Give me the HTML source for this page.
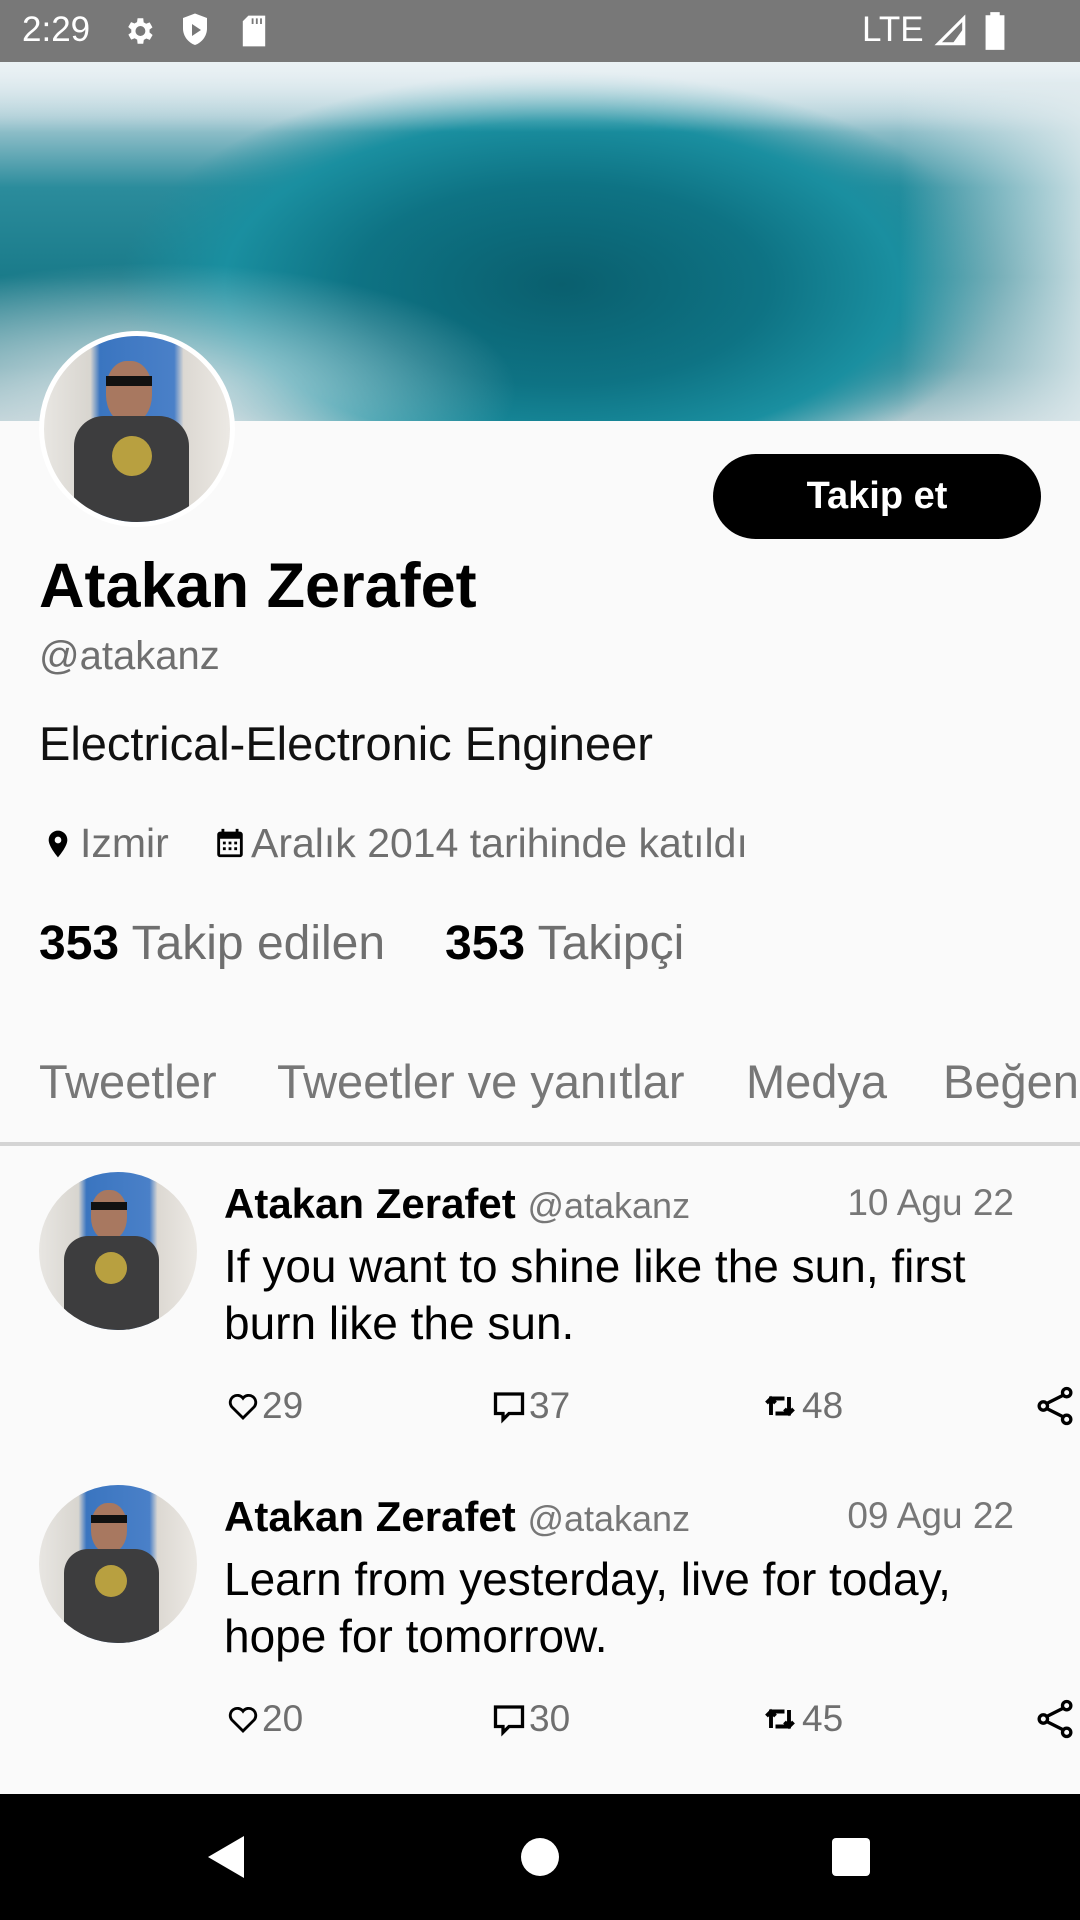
<!DOCTYPE html>
<html><head><meta charset="utf-8"><style>
*{margin:0;padding:0;box-sizing:border-box}
body{width:1080px;height:1920px;background:#fafafa;font-family:"Liberation Sans",Roboto,sans-serif;position:relative;overflow:hidden;color:#000}
.a{position:absolute;white-space:nowrap}
.sb{left:0;top:0;width:1080px;height:62px;background:#787878;color:#fff}
.banner{left:0;top:62px;width:1080px;height:359px;overflow:hidden;
background:radial-gradient(ellipse 48% 70% at 52% 62%,#0a5f6e 0%,#0e7384 40%,#1a8fa0 65%,rgba(40,140,160,0) 85%),
linear-gradient(180deg,#dfe9ee 0%,#a8cbd4 15%,#2b8c9c 35%,#1a7b8a 60%,#5a9aa5 85%,#b0c9cf 100%)}
.av{border-radius:50%;overflow:hidden;background:linear-gradient(90deg,#e8e6e2 0%,#d8d5cf 25%,#3a75c0 30%,#4a80c8 70%,#dcd8d2 75%,#ece9e4 100%)}
.gray{color:#6f6f6f}
.act{font-size:37px;color:#6f6f6f;display:flex;align-items:center;gap:2px}
</style></head><body>
<div class="a sb">
 <div class="a" style="left:22px;top:10px;font-size:35px">2:29</div>
 <svg class="a" style="left:122px;top:14px" width="34" height="34" viewBox="0 0 24 24"><path fill="#fff" d="M19.4 13a7.5 7.5 0 0 0 0-2l2.1-1.6-2-3.5-2.5 1a7 7 0 0 0-1.7-1L15 3h-4l-.4 2.7a7 7 0 0 0-1.7 1l-2.5-1-2 3.5L6.6 11a7.5 7.5 0 0 0 0 2l-2.1 1.6 2 3.5 2.5-1a7 7 0 0 0 1.7 1L11 21h4l.4-2.7a7 7 0 0 0 1.7-1l2.5 1 2-3.5zM13 15.5a3.5 3.5 0 1 1 0-7 3.5 3.5 0 0 1 0 7z"/></svg>
 <svg class="a" style="left:180px;top:12px" width="30" height="36" viewBox="0 0 20 24"><path fill="#fff" d="M10 1 2 4v7c0 5 3.5 9.5 8 11 4.5-1.5 8-6 8-11V4z"/><path fill="#787878" d="M8 8v8l6-4z"/></svg>
 <svg class="a" style="left:240px;top:14px" width="28" height="34" viewBox="0 0 20 24"><path fill="#fff" d="M6 1h12v22H2V5z"/><path stroke="#787878" stroke-width="1.3" d="M9 3v4M12 3v4M15 3v4"/></svg>
 <div class="a" style="left:862px;top:10px;font-size:35px">LTE</div>
 <svg class="a" style="left:934px;top:14px" width="34" height="34" viewBox="0 0 24 24"><path fill="none" stroke="#fff" stroke-width="2.2" d="M21 3v18H3z"/><path fill="#fff" d="M21 10v11h-8z"/></svg>
 <svg class="a" style="left:984px;top:12px" width="22" height="38" viewBox="0 0 14 24"><path fill="#fff" d="M4 0h6v2h3v22H1V2h3z"/></svg>
</div>
<div class="a banner">
 <div class="a" style="left:0;top:0;width:1080px;height:70px;background:linear-gradient(180deg,rgba(235,242,245,.95),rgba(235,242,245,0))"></div>
 <div class="a" style="left:0;top:200px;width:520px;height:160px;background:radial-gradient(ellipse at 30% 80%,rgba(225,232,235,.85),rgba(200,215,220,0) 70%)"></div>
 <div class="a" style="left:900px;top:20px;width:180px;height:340px;background:linear-gradient(90deg,rgba(220,232,236,0),rgba(225,235,238,.85))"></div>
</div>
<div class="a av" style="left:39px;top:331px;width:196px;height:196px;border:5px solid #fff">
 <div class="a" style="left:62px;top:25px;width:46px;height:62px;border-radius:45%;background:#a87860"></div>
 <div class="a" style="left:62px;top:40px;width:46px;height:10px;background:#111"></div>
 <div class="a" style="left:30px;top:80px;width:115px;height:120px;border-radius:30px 30px 0 0;background:#3d3d3e"></div>
 <div class="a" style="left:68px;top:100px;width:40px;height:40px;border-radius:50%;background:#b8a040"></div>
</div>
<div class="a" style="left:713px;top:454px;width:328px;height:85px;border-radius:43px;background:#000;color:#fff;font-weight:bold;font-size:38px;text-align:center;line-height:85px">Takip et</div>
<div class="a" style="left:39px;top:550px;font-size:63px;font-weight:bold">Atakan Zerafet</div>
<div class="a gray" style="left:39px;top:634px;font-size:40px">@atakanz</div>
<div class="a" style="left:39px;top:716px;font-size:47px;color:#111">Electrical-Electronic Engineer</div>
<svg class="a" style="left:42px;top:826px" width="32" height="36" viewBox="0 0 24 24"><path fill="#000" d="M12 2a7 7 0 0 0-7 7c0 5 7 13 7 13s7-8 7-13a7 7 0 0 0-7-7zm0 9.5a2.5 2.5 0 1 1 0-5 2.5 2.5 0 0 1 0 5z"/></svg>
<div class="a gray" style="left:80px;top:820px;font-size:41px">Izmir</div>
<svg class="a" style="left:213px;top:826px" width="34" height="34" viewBox="0 0 24 24"><path fill="#000" d="M19 4h-1V2h-2v2H8V2H6v2H5a2 2 0 0 0-2 2v14a2 2 0 0 0 2 2h14a2 2 0 0 0 2-2V6a2 2 0 0 0-2-2zm0 16H5V9h14zM7 11h2v2H7zm4 0h2v2h-2zm4 0h2v2h-2zm-8 4h2v2H7zm4 0h2v2h-2zm4 0h2v2h-2z"/></svg>
<div class="a gray" style="left:251px;top:820px;font-size:41px">Aralık 2014 tarihinde katıldı</div>
<div class="a" style="left:39px;top:916px;font-size:48px"><b>353</b> <span class="gray">Takip edilen</span></div>
<div class="a" style="left:445px;top:916px;font-size:48px"><b>353</b> <span class="gray">Takipçi</span></div>
<div class="a gray" style="left:39px;top:1054px;font-size:47px;color:#777">Tweetler</div>
<div class="a gray" style="left:277px;top:1054px;font-size:47px;color:#777">Tweetler ve yanıtlar</div>
<div class="a gray" style="left:746px;top:1054px;font-size:47px;color:#777">Medya</div>
<div class="a gray" style="left:943px;top:1054px;font-size:47px;color:#777">Beğeni</div>
<div class="a" style="left:0;top:1142px;width:1080px;height:4px;background:#d4d4d4"></div>

<div class="a" style="left:0;top:1170px;width:1080px;height:300px">
 <div class="a av" style="left:39px;top:2px;width:158px;height:158px">
  <div class="a" style="left:52px;top:18px;width:36px;height:50px;border-radius:45%;background:#a87860"></div>
  <div class="a" style="left:52px;top:30px;width:36px;height:8px;background:#111"></div>
  <div class="a" style="left:25px;top:64px;width:95px;height:100px;border-radius:24px 24px 0 0;background:#3d3d3e"></div>
  <div class="a" style="left:56px;top:80px;width:32px;height:32px;border-radius:50%;background:#b8a040"></div>
 </div>
 <div class="a" style="left:224px;top:10px;font-size:42px;font-weight:bold">Atakan Zerafet <span style="font-weight:normal;font-size:36px;color:#777">@atakanz</span></div>
 <div class="a" style="right:66px;top:12px;font-size:37px;color:#777">10 Agu 22</div>
 <div class="a" style="left:224px;top:68px;font-size:46px;line-height:57px">If you want to shine like the sun, first<br>burn like the sun.</div>
</div>
<div class="a" style="left:0;top:1483px;width:1080px;height:300px">
 <div class="a av" style="left:39px;top:2px;width:158px;height:158px">
  <div class="a" style="left:52px;top:18px;width:36px;height:50px;border-radius:45%;background:#a87860"></div>
  <div class="a" style="left:52px;top:30px;width:36px;height:8px;background:#111"></div>
  <div class="a" style="left:25px;top:64px;width:95px;height:100px;border-radius:24px 24px 0 0;background:#3d3d3e"></div>
  <div class="a" style="left:56px;top:80px;width:32px;height:32px;border-radius:50%;background:#b8a040"></div>
 </div>
 <div class="a" style="left:224px;top:10px;font-size:42px;font-weight:bold">Atakan Zerafet <span style="font-weight:normal;font-size:36px;color:#777">@atakanz</span></div>
 <div class="a" style="right:66px;top:12px;font-size:37px;color:#777">09 Agu 22</div>
 <div class="a" style="left:224px;top:68px;font-size:46px;line-height:57px">Learn from yesterday, live for today,<br>hope for tomorrow.</div>
</div>

<div class="a" style="left:0;top:1385px;width:1080px;height:50px">
 <div class="a act" style="left:226px;top:0"><svg width="34" height="34" viewBox="0 0 24 24"><path fill="none" stroke="#000" stroke-width="2" d="M12 20.5 4 12.5a5 5 0 0 1 8-6 5 5 0 0 1 8 6z"/></svg>29</div>
 <div class="a act" style="left:491px;top:0"><svg width="36" height="36" viewBox="0 0 24 24"><path fill="none" stroke="#000" stroke-width="2.2" d="M3 4h18v13H12l-4 4v-4H3z"/></svg>37</div>
 <div class="a act" style="left:760px;top:0"><svg width="40" height="36" viewBox="0 0 24 24"><path fill="none" stroke="#000" stroke-width="2.6" d="M6 18V7h9M3 10l3-3 3 3M18 6v11H9M15 14l3 3 3-3"/></svg>48</div>
 <svg class="a" style="left:1035px;top:0" width="40" height="42" viewBox="0 0 24 24"><g fill="none" stroke="#000" stroke-width="2"><circle cx="19" cy="4" r="2.5"/><circle cx="5" cy="12" r="2.5"/><circle cx="19" cy="20" r="2.5"/><path d="M17 5.5 7 10.5M7 13.5l10 5"/></g></svg>
</div>
<div class="a" style="left:0;top:1698px;width:1080px;height:50px">
 <div class="a act" style="left:226px;top:0"><svg width="34" height="34" viewBox="0 0 24 24"><path fill="none" stroke="#000" stroke-width="2" d="M12 20.5 4 12.5a5 5 0 0 1 8-6 5 5 0 0 1 8 6z"/></svg>20</div>
 <div class="a act" style="left:491px;top:0"><svg width="36" height="36" viewBox="0 0 24 24"><path fill="none" stroke="#000" stroke-width="2.2" d="M3 4h18v13H12l-4 4v-4H3z"/></svg>30</div>
 <div class="a act" style="left:760px;top:0"><svg width="40" height="36" viewBox="0 0 24 24"><path fill="none" stroke="#000" stroke-width="2.6" d="M6 18V7h9M3 10l3-3 3 3M18 6v11H9M15 14l3 3 3-3"/></svg>45</div>
 <svg class="a" style="left:1035px;top:0" width="40" height="42" viewBox="0 0 24 24"><g fill="none" stroke="#000" stroke-width="2"><circle cx="19" cy="4" r="2.5"/><circle cx="5" cy="12" r="2.5"/><circle cx="19" cy="20" r="2.5"/><path d="M17 5.5 7 10.5M7 13.5l10 5"/></g></svg>
</div>

<div class="a" style="left:0;top:1794px;width:1080px;height:126px;background:#000">
 <svg class="a" style="left:204px;top:40px" width="44" height="46" viewBox="0 0 44 46"><path fill="#fff" d="M40 2v42L4 23z"/></svg>
 <div class="a" style="left:521px;top:44px;width:38px;height:38px;border-radius:50%;background:#fff"></div>
 <div class="a" style="left:832px;top:44px;width:38px;height:38px;border-radius:4px;background:#fff"></div>
</div>
</body></html>
